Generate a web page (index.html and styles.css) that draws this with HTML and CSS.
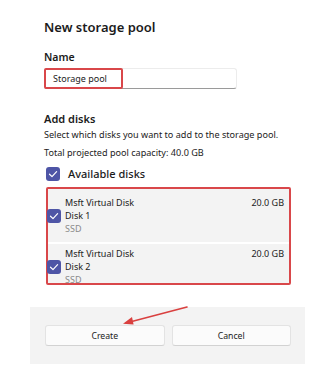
FILE: index.html
```html
<!DOCTYPE html>
<html>
<head>
<meta charset="utf-8">
<link rel="stylesheet" href="styles.css">
</head>
<body>
<div class="dialog">
  <div class="content">
    <h1 class="title">New storage pool</h1>
    <div class="label">Name</div>
    <div class="input">
      <span class="input-text">Storage pool</span>
    </div>
    <h2 class="section">Add disks</h2>
    <p class="desc">Select which disks you want to add to the storage pool.</p>
    <p class="desc total">Total projected pool capacity: 40.0 GB</p>
    <div class="avail">
      <span class="check"><svg viewBox="0 0 14 14" width="14" height="14"><path d="M3.5 7.2 L6 9.6 L10.6 4.6" fill="none" stroke="#fff" stroke-width="1.2" stroke-linecap="round" stroke-linejoin="round"/></svg></span>
      <span class="avail-text">Available disks</span>
    </div>
    <div class="disks">
      <div class="disk first">
        <span class="check"><svg viewBox="0 0 14 14" width="14" height="14"><path d="M3.5 7.2 L6 9.6 L10.6 4.6" fill="none" stroke="#fff" stroke-width="1.2" stroke-linecap="round" stroke-linejoin="round"/></svg></span>
        <div class="disk-info">
          <div class="disk-name">Msft Virtual Disk</div>
          <div class="disk-id">Disk 1</div>
          <div class="disk-type">SSD</div>
        </div>
        <div class="disk-size">20.0 GB</div>
      </div>
      <div class="disk second">
        <span class="check"><svg viewBox="0 0 14 14" width="14" height="14"><path d="M3.5 7.2 L6 9.6 L10.6 4.6" fill="none" stroke="#fff" stroke-width="1.2" stroke-linecap="round" stroke-linejoin="round"/></svg></span>
        <div class="disk-info">
          <div class="disk-name">Msft Virtual Disk</div>
          <div class="disk-id">Disk 2</div>
          <div class="disk-type">SSD</div>
        </div>
        <div class="disk-size">20.0 GB</div>
      </div>
    </div>
  </div>
  <div class="footer">
    <button class="btn">Create</button>
    <button class="btn">Cancel</button>
  </div>
  <svg class="arrow" width="80" height="30" viewBox="0 0 80 30">
    <path d="M64 2 L3 18" stroke="#d9403f" stroke-width="1.6" fill="none" stroke-linecap="round"/>
    <path d="M0 18.8 L9 12 L10.6 19.6 Z" fill="#d9403f"/>
  </svg>
</div>
</body>
</html>
```

FILE: styles.css
```css
* { box-sizing: border-box; }
html, body {
  margin: 0;
  padding: 0;
  background: #ffffff;
}
body {
  font-family: "Noto Sans", "Open Sans", sans-serif;
  color: #1b1b1b;
  width: 329px;
  height: 390px;
  overflow: hidden;
}
.dialog {
  position: relative;
  margin-left: 30px;
  width: 275px;
}
.content {
  padding: 18px 14px 22px 14px;
}
.title {
  margin: 0;
  font-size: 13px;
  font-weight: 600;
  line-height: 18px;
}
.label {
  margin-top: 14px;
  font-size: 10.5px;
  font-weight: 600;
  line-height: 14px;
}
.input {
  margin-top: 4px;
  width: 193px;
  height: 21px;
  border: 1px solid #ececec;
  border-bottom: 1px solid #9a9a9a;
  border-radius: 3px;
  display: flex;
  align-items: stretch;
}
.input-text {
  width: 79px;
  border: 2px solid #d9474a;
  border-radius: 2px;
  margin: -1px 0 -1px -1px;
  font-size: 9px;
  line-height: 17px;
  padding-left: 7px;
  color: #222;
}
.section {
  margin: 23px 0 0 0;
  font-size: 11px;
  font-weight: 600;
  line-height: 14px;
}
.desc {
  margin: 2px 0 0 0;
  font-size: 9.1px;
  line-height: 13px;
  color: #222;
}
.desc.total {
  margin-top: 5px;
}
.avail {
  margin-top: 8px;
  display: flex;
  align-items: center;
  gap: 8px;
  padding-left: 2px;
}
.check {
  display: inline-flex;
  width: 14px;
  height: 14px;
  border-radius: 3px;
  background: #4e55a6;
  flex: none;
}
.avail-text {
  font-size: 11px;
  font-weight: 500;
  line-height: 14px;
}
.disks {
  margin-top: 6px;
  margin-left: 2px;
  width: 245px;
  border: 2px solid #d9474a;
  border-radius: 2px;
  background: #ffffff;
  display: flex;
  flex-direction: column;
  gap: 2px;
}
.disk {
  background: #f3f3f3;
  display: flex;
  align-items: flex-start;
  padding-right: 5px;
}
.disk.first {
  height: 53px;
  padding-top: 7px;
}
.disk.second {
  height: 39px;
  padding-top: 3px;
  overflow: visible;
}
.disk .check {
  margin-left: -1px;
  margin-right: 4px;
  margin-top: 13px;
}
.disk-info {
  flex: 1;
  font-size: 9px;
  line-height: 13px;
  color: #222;
}
.disk-type {
  color: #8a8a8a;
}
.disk-size {
  font-size: 9px;
  line-height: 13px;
  color: #222;
}
.footer {
  background: #f3f3f3;
  height: 57px;
  padding: 18px 14px 0 15px;
  display: flex;
  gap: 7px;
  align-items: flex-start;
}
.btn {
  flex: 1;
  height: 21px;
  background: #fbfbfb;
  border: 1px solid #e3e3e3;
  border-bottom-color: #d2d2d2;
  border-radius: 3px;
  font-family: "Noto Sans", "Open Sans", sans-serif;
  font-size: 8.7px;
  color: #222;
  padding: 0;
}
.arrow {
  position: absolute;
  left: 93px;
  top: 305px;
}
```
